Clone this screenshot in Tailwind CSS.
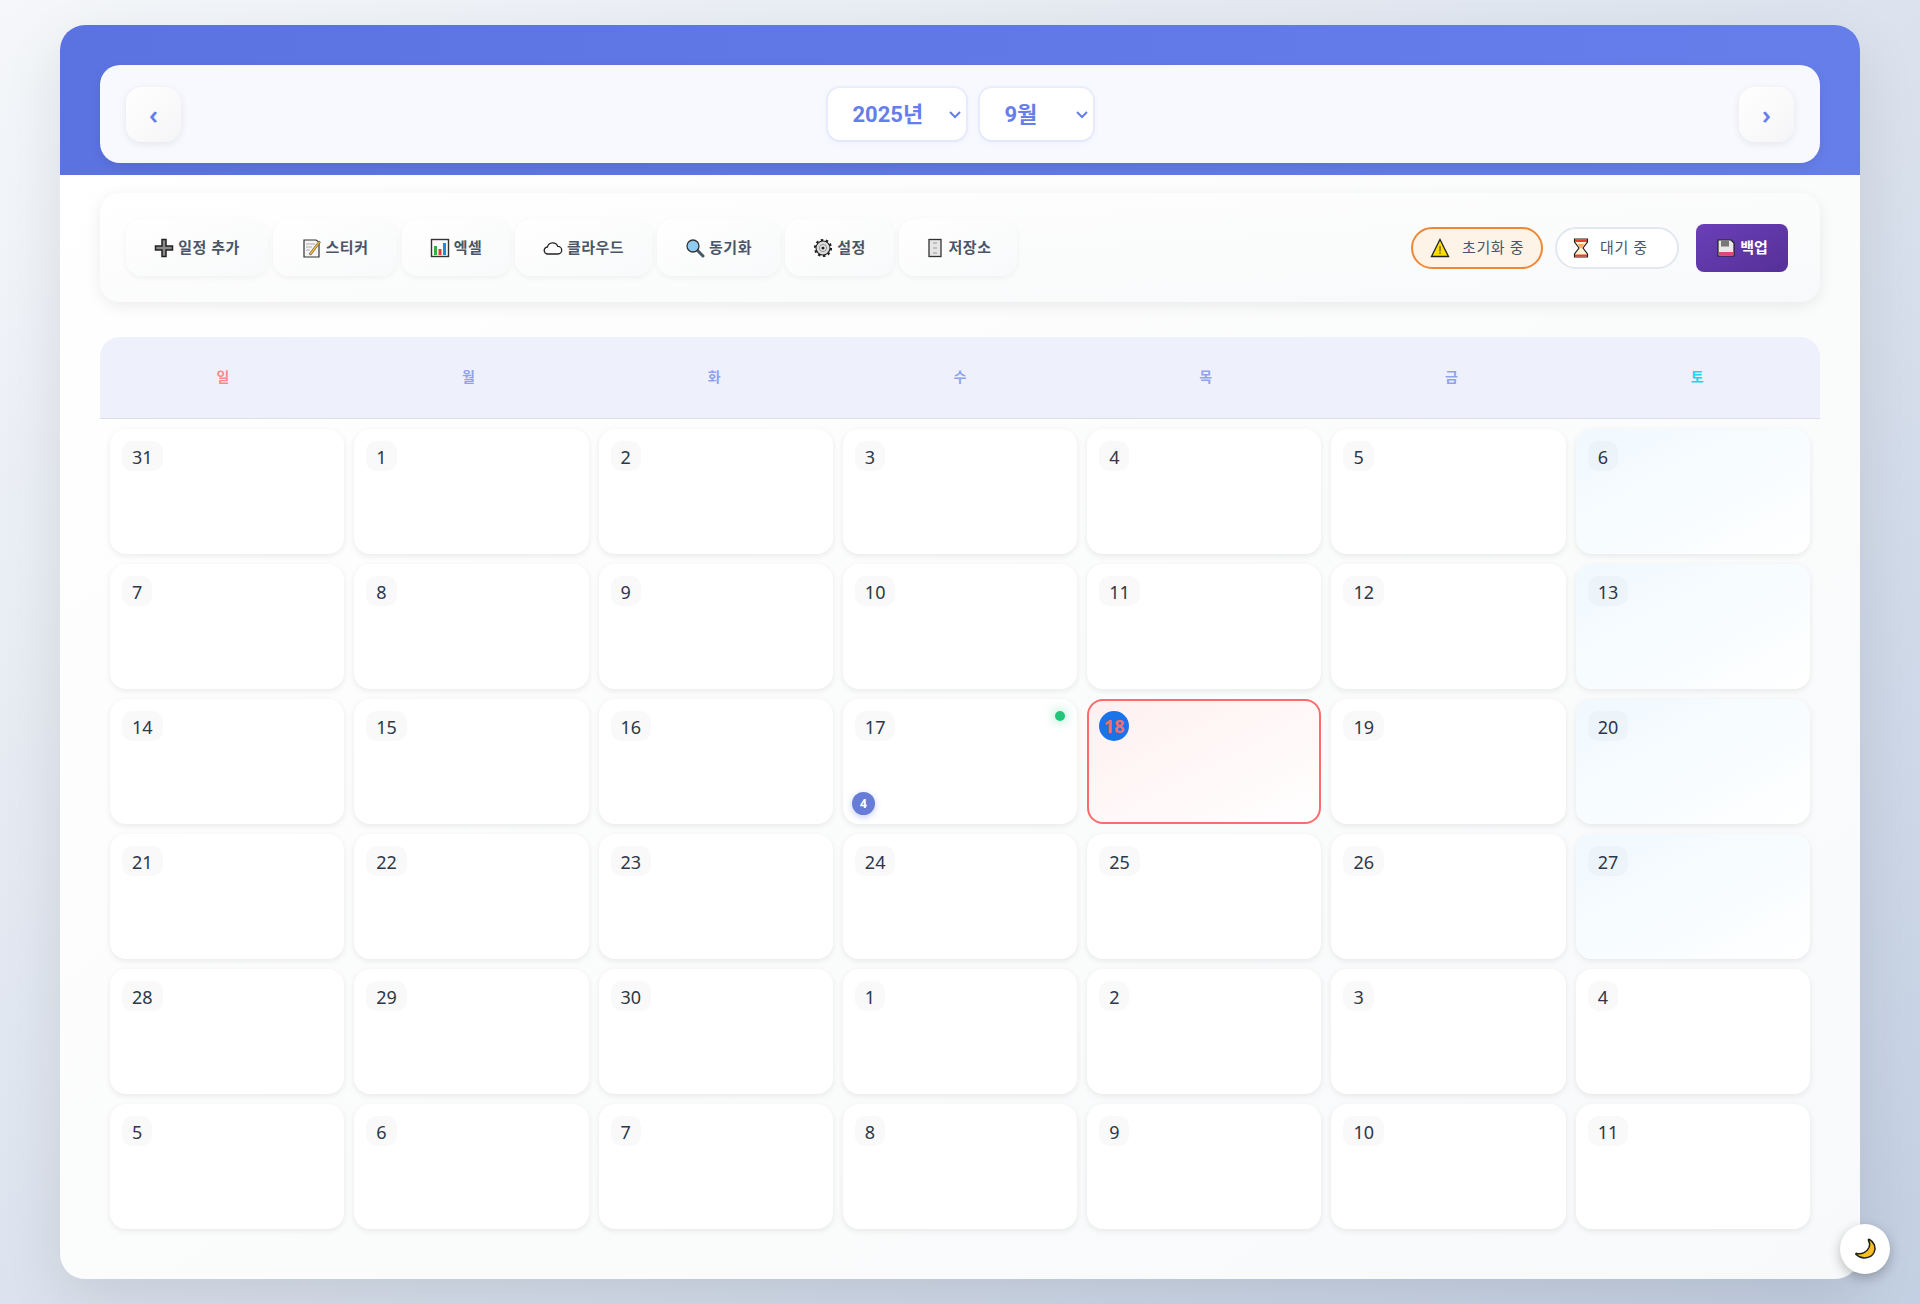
<!DOCTYPE html>
<html lang="ko">
<head>
<meta charset="UTF-8">
<title>캘린더</title>
<script src="https://cdn.jsdelivr.net/npm/@tailwindcss/browser@4"></script>
</head>
<body class="m-0 h-[1304px] overflow-hidden bg-gradient-to-br from-[#f5f7fa] to-[#c3cfe2] font-['Noto_Sans','Noto_Sans_CJK_KR',sans-serif] text-[#2d3748]">
<div class="relative mx-auto mt-[25px] flex h-[1254px] w-[1800px] flex-col rounded-[25px] bg-gradient-to-br from-white to-[#f8f9fa] shadow-[0_20px_60px_rgba(0,0,0,0.1)]">

  <!-- month header -->
  <header class="h-[150px] shrink-0 rounded-t-[25px] bg-gradient-to-r from-[#5b73e1] to-[#667eea] px-10 pb-3 pt-10">
    <div class="flex h-[98px] items-center justify-between rounded-[20px] bg-[#f8f9fe] px-[26px] shadow-[0_4px_12px_rgba(0,0,0,0.08)]">
      <button class="flex h-[55px] w-[55px] items-center justify-center rounded-2xl bg-gradient-to-br from-white to-[#f5f5f7] text-[26px] font-semibold text-[#667eea] shadow-[0_2px_8px_rgba(0,0,0,0.08)]">‹</button>
      <div class="flex items-center gap-3.5">
        <div class="flex h-[52px] w-[138px] items-center justify-between rounded-xl bg-white pl-[25px] pr-[5px] text-[22px] font-bold text-[#667eea] shadow-[0_0_0_2px_rgba(102,126,234,0.08),0_2px_6px_rgba(102,126,234,0.1)]">
          <span class="font-['Roboto','Noto_Sans_CJK_KR',sans-serif]">2025년</span>
          <svg class="h-3 w-3" viewBox="0 0 12 12" fill="none" stroke="#667eea" stroke-width="2"><path d="M1 4l5 5 5-5"/></svg>
        </div>
        <div class="flex h-[52px] w-[113px] items-center justify-between rounded-xl bg-white pl-[25px] pr-[5px] text-[22px] font-bold text-[#667eea] shadow-[0_0_0_2px_rgba(102,126,234,0.08),0_2px_6px_rgba(102,126,234,0.1)]">
          <span class="font-['Roboto','Noto_Sans_CJK_KR',sans-serif]">9월</span>
          <svg class="h-3 w-3" viewBox="0 0 12 12" fill="none" stroke="#667eea" stroke-width="2"><path d="M1 4l5 5 5-5"/></svg>
        </div>
      </div>
      <button class="flex h-[55px] w-[55px] items-center justify-center rounded-2xl bg-gradient-to-br from-white to-[#f5f5f7] text-[26px] font-semibold text-[#667eea] shadow-[0_2px_8px_rgba(0,0,0,0.08)]">›</button>
    </div>
  </header>

  <main class="flex flex-col px-10 pt-[18px]">
    <!-- toolbar -->
    <div class="flex h-[109px] items-center justify-between rounded-[20px] bg-gradient-to-br from-white to-[#f8f9fa] pl-[26px] pr-[32px] shadow-[0_4px_16px_rgba(0,0,0,0.08)]">
      <div class="flex gap-[5px] text-[15px] font-semibold tracking-[0.5px] text-[#4a5568]">
        <button class="flex h-[57px] w-[142px] items-center justify-center gap-1 rounded-2xl bg-gradient-to-br from-white to-[#f8f9fa] shadow-[0_2px_6px_rgba(0,0,0,0.05)]">
          <svg class="h-5 w-5" viewBox="0 0 20 20"><path d="M8 1.500h4V8h6.500v4H12v6.500H8V12H1.500V8H8z" fill="#8a8a8a" stroke="#222" stroke-width="1.500"/></svg>일정 추가
        </button>
        <button class="flex h-[57px] w-[124px] items-center justify-center gap-1 rounded-2xl bg-gradient-to-br from-white to-[#f8f9fa] shadow-[0_2px_6px_rgba(0,0,0,0.05)]">
          <svg class="h-5 w-5" viewBox="0 0 20 20"><path d="M2 2h12l3 2v15H2z" fill="#f5f5f5" stroke="#333" stroke-width="1.200"/><path d="M4 6h9M4 9h6M4 12h4" stroke="#aaa"/><path d="M7 16l10-13 1.500 1.200L9 17z" fill="#f5b82e" stroke="#444" stroke-width=".6"/></svg>스티커
        </button>
        <button class="flex h-[57px] w-[108px] items-center justify-center gap-1 rounded-2xl bg-gradient-to-br from-white to-[#f8f9fa] shadow-[0_2px_6px_rgba(0,0,0,0.05)]">
          <svg class="h-5 w-5" viewBox="0 0 20 20"><rect x="1.500" y="1.500" width="17" height="17" fill="#fafafa" stroke="#333" stroke-width="1.400"/><rect x="4" y="8" width="3" height="9" fill="#2fb344"/><rect x="8.500" y="11" width="3" height="6" fill="#e53935"/><rect x="13" y="5" width="3" height="12" fill="#1e88e5"/></svg>엑셀
        </button>
        <button class="flex h-[57px] w-[137px] items-center justify-center gap-1 rounded-2xl bg-gradient-to-br from-white to-[#f8f9fa] shadow-[0_2px_6px_rgba(0,0,0,0.05)]">
          <svg class="h-5 w-5" viewBox="0 0 20 20"><path d="M5 16a3.500 3.500 0 0 1-.6-7 5.500 5.500 0 0 1 10.400-.6A3.800 3.800 0 0 1 15 16z" fill="#fff" stroke="#222" stroke-width="1.300"/></svg>클라우드
        </button>
        <button class="flex h-[57px] w-[123px] items-center justify-center gap-1 rounded-2xl bg-gradient-to-br from-white to-[#f8f9fa] shadow-[0_2px_6px_rgba(0,0,0,0.05)]">
          <svg class="h-5 w-5" viewBox="0 0 20 20"><path d="M12 12l6 6" stroke="#455a64" stroke-width="3" stroke-linecap="round"/><circle cx="8" cy="8" r="6" fill="#8ecbf0" stroke="#333" stroke-width="1.300"/></svg>동기화
        </button>
        <button class="flex h-[57px] w-[109px] items-center justify-center gap-1 rounded-2xl bg-gradient-to-br from-white to-[#f8f9fa] shadow-[0_2px_6px_rgba(0,0,0,0.05)]">
          <svg class="h-5 w-5" viewBox="0 0 20 20"><circle cx="10" cy="10" r="8" fill="none" stroke="#222" stroke-width="2.200" stroke-dasharray="2.500 2.530"/><circle cx="10" cy="10" r="7" fill="#ddd" stroke="#222" stroke-width="1.100"/><circle cx="10" cy="10" r="3.500" fill="#f5f5f5" stroke="#888"/><circle cx="10" cy="10" r="1.600" fill="#222"/></svg>설정
        </button>
        <button class="flex h-[57px] w-[118px] items-center justify-center gap-1 rounded-2xl bg-gradient-to-br from-white to-[#f8f9fa] shadow-[0_2px_6px_rgba(0,0,0,0.05)]">
          <svg class="h-5 w-5" viewBox="0 0 20 20"><rect x="4" y="1.500" width="12" height="17" fill="#e5e5e5" stroke="#333" stroke-width="1.300"/><path d="M8 5h4M8 10h4M8 15h4" stroke="#999"/></svg>저장소
        </button>
      </div>
      <div class="flex items-center">
        <div class="flex h-[42px] w-[132px] items-center gap-3 rounded-full border-2 border-[#ed8936] bg-[#fdf3e7] pl-[17px] text-[15px] tracking-[0.6px] text-[#4a5568]">
          <svg class="h-5 w-5" viewBox="0 0 20 20"><path d="M10 1.500l8.500 17h-17z" fill="#ffdd00" stroke="#222" stroke-width="1.300"/><path d="M10 8v5.500M10 14.500v1.500" stroke="#333"/></svg>초기화 중
        </div>
        <div class="ml-3 flex h-[42px] w-[124px] items-center gap-[9px] rounded-full border-2 border-[#e2e8f0] bg-white pl-[14px] text-[15px] tracking-[0.6px] text-[#4a5568]">
          <svg class="h-5 w-5" viewBox="0 0 20 20"><path d="M3.500 1h13v3l-4.500 6 4.500 6v3h-13v-3L8 10 3.500 4z" fill="#fff3d6" stroke="#222" stroke-width="1.200"/><path d="M4 1.500h12v2.500H4zM4 16.500h12v2H4z" fill="#e53e2a"/><path d="M6.500 6h7l-3.500 4.500z" fill="#f6ad55"/></svg>대기 중
        </div>
        <button class="ml-[17px] flex h-12 w-[92px] items-center justify-center gap-1 rounded-lg bg-gradient-to-br from-[#6b3fb8] to-[#553098] text-[15px] font-bold text-white">
          <svg class="h-5 w-5" viewBox="0 0 20 20"><path d="M2 2h13l3 3v13H2z" fill="#e8e8e8" stroke="#222" stroke-width="1.200"/><rect x="5" y="2.500" width="8" height="6" fill="#777"/><rect x="3" y="14" width="14" height="3.500" fill="#e0457b"/></svg>백업
        </button>
      </div>
    </div>

    <!-- calendar -->
    <section class="mt-[35px]">
      <div class="grid h-[82px] grid-cols-7 items-center rounded-t-[20px] border-b border-[#dcdde6] bg-[#eef0fc] pb-[2px] text-center text-sm font-semibold text-[#667eea]/70">
        <div class="text-[#ff6b6b]/80">일</div><div>월</div><div>화</div><div>수</div><div>목</div><div>금</div><div class="text-[#22d3ee]">토</div>
      </div>
      <div id="days" class="grid grid-cols-7 gap-2.5 p-2.5"></div>
    </section>
  </main>

  <button class="absolute bottom-[5px] right-[-30px] flex h-[50px] w-[50px] items-center justify-center rounded-full bg-white shadow-[0_4px_12px_rgba(0,0,0,0.25)]">
    <svg class="h-6 w-6" viewBox="0 0 24 24"><path d="M16.500 2.500C21 5 23.500 10 21 15.500 18 21.500 9 23 3 17.500 2.500 17 3 16 4 16.500 9 17.500 14 15 16 10.500 17 8 16.500 5 15.500 3.500 15 2.500 15.500 2 16.500 2.500z" fill="#fbbf24" stroke="#222" stroke-width="1.500" stroke-linejoin="round"/></svg>
  </button>
</div>

<script>
  const nums = [31,1,2,3,4,5,6,7,8,9,10,11,12,13,14,15,16,17,18,19,20,21,22,23,24,25,26,27,28,29,30,1,2,3,4,5,6,7,8,9,10,11];
  const html = nums.map((n, i) => {
    const sat = i % 7 === 6 && i < 28;
    if (i === 18) {
      return `<div class="relative h-[125px] rounded-2xl border-2 border-[#ff6b6b] bg-gradient-to-br from-[#fff0f0] to-white p-2.5"><span class="flex h-[30px] w-[30px] items-center justify-center rounded-full bg-[#1a73e8] text-lg font-bold text-[#ff6b6b]">18</span></div>`;
    }
    const bg = sat ? 'bg-gradient-to-br from-[#f0f9ff] to-white' : 'bg-white';
    let extra = '';
    if (i === 17) {
      extra = `<span class="absolute right-[12px] top-[12px] h-2.5 w-2.5 rounded-full bg-[#22c57a] shadow-[0_0_12px_rgba(34,197,122,0.6)]"></span><span class="absolute bottom-[9px] left-[9px] flex h-[23px] w-[23px] items-center justify-center rounded-full bg-[#667cd6] text-xs font-bold text-white shadow-[0_2px_6px_rgba(102,126,234,0.4)]">4</span>`;
    }
    return `<div class="relative h-[125px] rounded-2xl ${bg} p-3 shadow-[0_2px_6px_rgba(0,0,0,0.08)]"><span class="inline-flex h-[30px] items-center rounded-[10px] bg-black/[0.025] px-2.5 pt-px text-lg text-[#2d3748]">${n}</span>${extra}</div>`;
  }).join('');
  document.getElementById('days').innerHTML = html;
</script>
</body>
</html>
